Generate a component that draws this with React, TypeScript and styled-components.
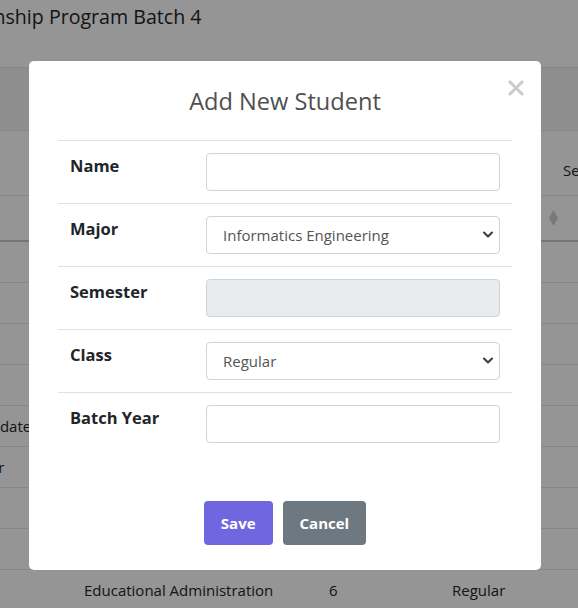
import React from "react";
import styled, { createGlobalStyle } from "styled-components";

const GlobalStyle = createGlobalStyle`
  html, body { margin: 0; padding: 0; }
  body {
    font-family: "Open Sans", "Noto Sans", "Liberation Sans", sans-serif;
    background: #ffffff;
    color: #212529;
    overflow: hidden;
  }
  * { box-sizing: border-box; }
`;

const Page = styled.div`
  width: 578px;
  height: 608px;
  overflow: hidden;
  background: #ffffff;
`;

const PageTitle = styled.h2`
  margin: 0 0 0 -50px;
  height: 40px;
  padding-top: 3px;
  font-size: 19.6px;
  font-weight: 400;
  color: #212529;
  white-space: nowrap;
`;

const Toolbar = styled.div`
  height: 27px;
`;

const BgTable = styled.div`
  display: flex;
  flex-direction: column;
`;

const BgRow = styled.div<{ $h: number; $shade?: boolean; $thick?: boolean }>`
  position: relative;
  height: ${(p) => p.$h}px;
  border-top: ${(p) => (p.$thick ? "2px solid #c9cbcd" : "1px solid #e6e6e6")};
  background: ${(p) => (p.$shade ? "#f3f3f3" : "transparent")};
  font-size: 15px;
  display: flex;
  align-items: center;
  white-space: nowrap;
`;

const BgCell = styled.span<{ $x: number; $dy?: number }>`
  position: absolute;
  left: ${(p) => p.$x}px;
  transform: translateY(${(p) => p.$dy ?? 0}px);
`;

const SortIcon = styled.svg<{ $x: number }>`
  position: absolute;
  left: ${(p) => p.$x}px;
`;

const Backdrop = styled.div`
  position: fixed;
  inset: 0;
  background: rgba(0, 0, 0, 0.415);
  display: flex;
  align-items: flex-start;
  padding: 61px 0 0 29px;
`;

const Popup = styled.div`
  position: relative;
  width: 512px;
  background: #ffffff;
  border-radius: 5px;
  padding: 0 29px 25px;
`;

const Header = styled.div`
  height: 79px;
  display: flex;
  justify-content: center;
  padding-top: 22px;
`;

const Title = styled.h2`
  margin: 0;
  font-size: 23.6px;
  font-weight: 400;
  color: #4f4f4f;
  line-height: 36px;
`;

const CloseButton = styled.button`
  position: absolute;
  top: 14px;
  right: 12px;
  width: 26px;
  height: 26px;
  padding: 0;
  border: none;
  background: transparent;
  display: flex;
  align-items: center;
  justify-content: center;
`;

const FormTable = styled.table`
  width: 100%;
  border-collapse: collapse;
`;

const FormRow = styled.tr`
  border-top: 1px solid #dee2e6;
`;

const LabelCell = styled.th`
  width: 136px;
  padding: 12px;
  text-align: left;
  vertical-align: top;
  font-size: 16.5px;
  font-weight: 700;
  line-height: 26px;
  color: #212529;
  white-space: nowrap;
`;

const FieldCell = styled.td`
  padding: 12px;
`;

const TextInput = styled.input<{ $disabled?: boolean }>`
  display: block;
  width: 100%;
  height: 38px;
  padding: 6px 16px;
  font-family: inherit;
  font-size: 15px;
  color: #555;
  background: ${(p) => (p.$disabled ? "#e9ecef" : "#ffffff")};
  border: 1px solid #ced4da;
  border-radius: 4px;
  outline: none;
`;

const SelectWrap = styled.div`
  position: relative;
`;

const Select = styled.select`
  display: block;
  width: 100%;
  height: 38px;
  padding: 6px 36px 6px 16px;
  font-family: inherit;
  font-size: 15px;
  color: #555;
  background: #ffffff;
  border: 1px solid #ced4da;
  border-radius: 4px;
  appearance: none;
  -webkit-appearance: none;
  outline: none;
`;

const Chevron = styled.svg`
  position: absolute;
  right: 6px;
  top: 14px;
  pointer-events: none;
`;

const Actions = styled.div`
  display: flex;
  justify-content: center;
  gap: 10px;
  margin-top: 46px;
`;

const ActionButton = styled.button<{ $variant: "confirm" | "cancel" }>`
  height: 44px;
  padding: 0 17px;
  border: none;
  border-radius: 4px;
  font-family: inherit;
  font-size: 15px;
  font-weight: 700;
  color: #ffffff;
  background: ${(p) => (p.$variant === "confirm" ? "#7066e0" : "#6e7881")};
`;

function ChevronIcon() {
  return (
    <Chevron width="12" height="9" viewBox="0 0 12 9">
      <path
        d="m2 2.5 4 4 4-4"
        fill="none"
        stroke="#343a40"
        strokeWidth="2"
        strokeLinecap="round"
        strokeLinejoin="round"
      />
    </Chevron>
  );
}

export default function App() {
  return (
    <>
      <GlobalStyle />
      <Page>
        <PageTitle>Internship Program Batch 4</PageTitle>
        <Toolbar />
        <BgTable>
          <BgRow $h={63} $shade />
          <BgRow $h={65}>
            <BgCell $x={563} $dy={7}>Semester</BgCell>
          </BgRow>
          <BgRow $h={45}>
            <SortIcon $x={549} width="9" height="16" viewBox="0 0 9 16">
              <path d="M4.5 0 9 8 4.5 16 0 8Z" fill="#d0d0d0" />
            </SortIcon>
          </BgRow>
          <BgRow $h={42} $thick />
          <BgRow $h={41} />
          <BgRow $h={41} />
          <BgRow $h={41} />
          <BgRow $h={41}>
            <BgCell $x={-40}>Candidate</BgCell>
          </BgRow>
          <BgRow $h={41}>
            <BgCell $x={-49}>Regular</BgCell>
          </BgRow>
          <BgRow $h={41} />
          <BgRow $h={41} />
          <BgRow $h={41}>
            <BgCell $x={84}>Educational Administration</BgCell>
            <BgCell $x={329}>6</BgCell>
            <BgCell $x={452}>Regular</BgCell>
          </BgRow>
        </BgTable>
      </Page>

      <Backdrop>
        <Popup>
          <Header>
            <Title>Add New Student</Title>
          </Header>
          <CloseButton aria-label="Close">
            <svg width="18" height="18" viewBox="0 0 18 18">
              <path d="M2 2 16 16M16 2 2 16" stroke="#cccccc" strokeWidth="3" />
            </svg>
          </CloseButton>
          <FormTable>
            <tbody>
              <FormRow>
                <LabelCell>Name</LabelCell>
                <FieldCell>
                  <TextInput type="text" />
                </FieldCell>
              </FormRow>
              <FormRow>
                <LabelCell>Major</LabelCell>
                <FieldCell>
                  <SelectWrap>
                    <Select defaultValue="Informatics Engineering">
                      <option>Informatics Engineering</option>
                      <option>Educational Administration</option>
                    </Select>
                    <ChevronIcon />
                  </SelectWrap>
                </FieldCell>
              </FormRow>
              <FormRow>
                <LabelCell>Semester</LabelCell>
                <FieldCell>
                  <TextInput type="text" disabled $disabled />
                </FieldCell>
              </FormRow>
              <FormRow>
                <LabelCell>Class</LabelCell>
                <FieldCell>
                  <SelectWrap>
                    <Select defaultValue="Regular">
                      <option>Regular</option>
                      <option>Employee</option>
                    </Select>
                    <ChevronIcon />
                  </SelectWrap>
                </FieldCell>
              </FormRow>
              <FormRow>
                <LabelCell>Batch Year</LabelCell>
                <FieldCell>
                  <TextInput type="text" />
                </FieldCell>
              </FormRow>
            </tbody>
          </FormTable>
          <Actions>
            <ActionButton $variant="confirm">Save</ActionButton>
            <ActionButton $variant="cancel">Cancel</ActionButton>
          </Actions>
        </Popup>
      </Backdrop>
    </>
  );
}
